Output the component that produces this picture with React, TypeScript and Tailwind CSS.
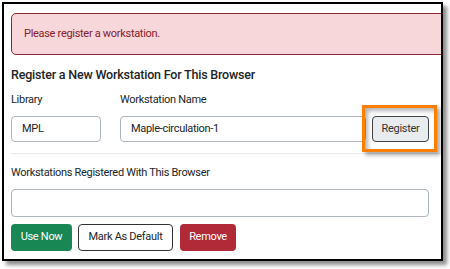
import React from "react";

export default function App() {
  const font = { fontFamily: 'Roboto, "Noto Sans", sans-serif' };
  return (
    <div className="w-[450px] h-[269px] bg-white overflow-hidden" style={font}>
      <div className="ml-[2px] mt-[2px] w-[441px] h-[259px] border-2 border-black bg-white overflow-hidden shadow-[4px_4px_4px_rgba(0,0,0,0.45)] text-[#212529]">
        <div className="pl-[7px] pt-[9px]">
          <div className="h-[42px] mr-[-10px] rounded-[5px] border border-[#8b2a35] bg-[#f8d7da] text-[#842029] text-[11px] tracking-[-0.3px] flex items-center pl-[12px]">
            Please register a workstation.
          </div>
          <div className="mt-[11px] text-[12.5px] tracking-[-0.2px] font-medium leading-[18px]">
            Register a New Workstation For This Browser
          </div>
          <div className="mt-[8px] flex items-start text-[11px] tracking-[-0.3px]">
            <div className="w-[90px] flex flex-col">
              <div className="leading-[16px]">Library</div>
              <div className="mt-[8px] h-[26px] rounded-[4px] border border-[#adb5bd] flex items-center pl-[10px]">MPL</div>
            </div>
            <div className="ml-[19px] w-[246px] flex flex-col">
              <div className="leading-[16px]">Workstation Name</div>
              <div className="mt-[8px] h-[26px] rounded-[4px] border border-[#adb5bd] flex items-center pl-[10px]">Maple-circulation-1</div>
            </div>
            <div className="relative ml-[6px] mt-[24px]">
              <div className="h-[26px] w-[57px] rounded-[4px] border border-[#3d4349] bg-[#e9ecef] text-[#333] flex items-center justify-center">Register</div>
              <div className="absolute left-[-10px] top-[-11px] w-[75px] h-[47px] border-[3px] border-[#ff8000] shadow-[3px_3px_4px_rgba(0,0,0,0.35),inset_3px_3px_4px_rgba(0,0,0,0.3)]"></div>
            </div>
          </div>
          <div className="mt-[11px] mr-[-10px] h-px bg-[#e9ecef]"></div>
          <div className="mt-[11px] text-[11px] tracking-[-0.3px] leading-[16px]">Workstations Registered With This Browser</div>
          <div className="mt-[8px] w-[418px] h-[28px] rounded-[4px] border border-[#adb5bd]"></div>
          <div className="mt-[7px] flex gap-[6px] text-[11px] tracking-[-0.3px]">
            <div className="h-[27px] w-[61px] rounded-[4px] bg-[#198754] text-white flex items-center justify-center">Use Now</div>
            <div className="h-[27px] w-[95px] rounded-[4px] border border-[#333] bg-white flex items-center justify-center">Mark As Default</div>
            <div className="ml-[1px] h-[27px] w-[56px] rounded-[4px] bg-[#b02a37] text-white flex items-center justify-center">Remove</div>
          </div>
        </div>
      </div>
    </div>
  );
}
